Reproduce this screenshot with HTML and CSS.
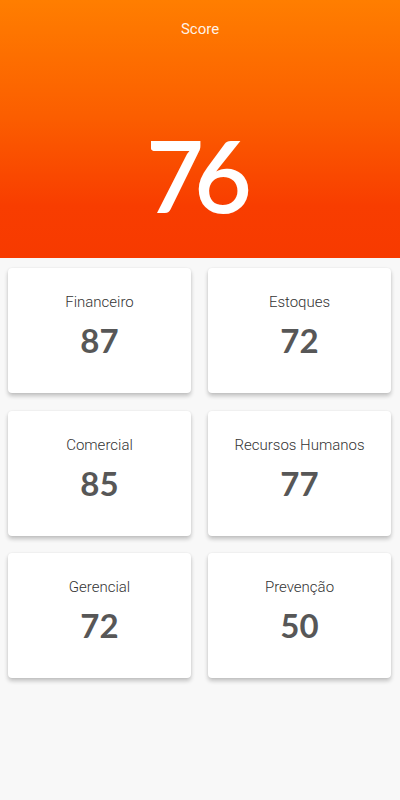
FILE: index.html
```html
<!DOCTYPE html>
<html lang="pt">
<head>
<meta charset="utf-8">
<title>Score</title>
<link rel="stylesheet" href="styles.css">
</head>
<body>
<header class="hero">
  <div class="hero-title">Score</div>
  <div class="hero-score">76</div>
</header>
<main class="grid">
  <div class="card"><div class="card-label">Financeiro</div><div class="card-value">87</div></div>
  <div class="card"><div class="card-label">Estoques</div><div class="card-value">72</div></div>
  <div class="card"><div class="card-label">Comercial</div><div class="card-value">85</div></div>
  <div class="card"><div class="card-label">Recursos Humanos</div><div class="card-value">77</div></div>
  <div class="card"><div class="card-label">Gerencial</div><div class="card-value">72</div></div>
  <div class="card"><div class="card-label">Prevenção</div><div class="card-value">50</div></div>
</main>
</body>
</html>
```
FILE: styles.css
```css
html, body {
  margin: 0;
  padding: 0;
}
body {
  width: 400px;
  height: 800px;
  background: #f8f8f8;
  font-family: Roboto, "Liberation Sans", sans-serif;
  overflow: hidden;
}
.hero {
  box-sizing: border-box;
  height: 258px;
  padding-top: 19px;
  background: linear-gradient(180deg, #ff7e00 0%, #fb5e00 45%, #f83d00 80%, #f73a00 100%);
  display: flex;
  flex-direction: column;
  align-items: center;
}
.hero-title {
  font-size: 15px;
  line-height: 20px;
  color: rgba(255, 255, 255, 0.92);
}
.hero-score {
  margin-top: 85px;
  margin-right: 12px;
  font-family: Lato, "Open Sans", sans-serif;
  font-weight: 600;
  font-size: 100px;
  line-height: 100px;
  letter-spacing: -10px;
  color: #ffffff;
}
.grid {
  display: grid;
  grid-template-columns: 183px 183px;
  grid-auto-rows: 125px;
  column-gap: 17px;
  row-gap: 17.5px;
  padding: 10px 9px 0 8px;
}
.card {
  box-sizing: border-box;
  background: #ffffff;
  border-radius: 4px;
  box-shadow: 0 3px 4px rgba(0, 0, 0, 0.22), 0 0 2px rgba(0, 0, 0, 0.08);
  padding-top: 24px;
  display: flex;
  flex-direction: column;
  align-items: center;
}
.card-label {
  font-size: 15px;
  line-height: 20px;
  font-weight: 300;
  color: #333333;
}
.card-value {
  margin-top: 8px;
  font-family: Lato, "Open Sans", sans-serif;
  font-weight: 700;
  font-size: 33px;
  line-height: 40px;
  color: #575757;
}
```
